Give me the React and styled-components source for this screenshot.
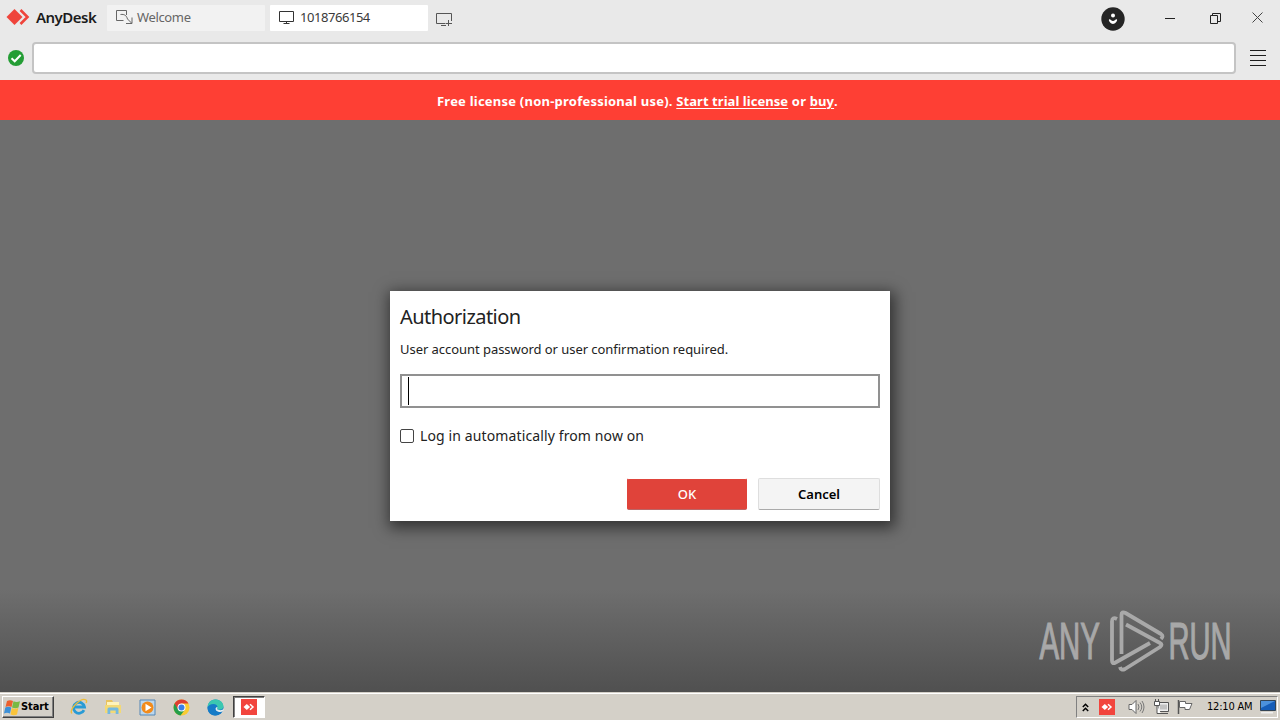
import React from 'react';
import styled, { createGlobalStyle } from 'styled-components';

const GlobalStyle = createGlobalStyle`
  * { box-sizing: border-box; }
  body { margin: 0; overflow: hidden; font-family: "Open Sans", "Noto Sans", sans-serif; }
  svg { display: block; flex: none; }
`;

const Screen = styled.div`
  display: flex;
  flex-direction: column;
  width: 1280px;
  height: 720px;
  overflow: hidden;
`;

const Header = styled.header`
  height: 80px;
  background: #e9e9e9;
  display: flex;
  flex-direction: column;
`;

const TitleBar = styled.div`
  height: 42px;
  display: flex;
  align-items: flex-start;
  padding: 5px 17px 0 6px;
`;

const Brand = styled.div`
  width: 101px;
  height: 24px;
  display: flex;
  align-items: center;
  gap: 6px;
  font: 600 15px/24px "Noto Sans", sans-serif;
  letter-spacing: -0.52px;
  color: #1b1b1b;
`;

const Tab = styled.div`
  width: 158px;
  height: 26px;
  margin-right: ${(p) => (p.$active ? 8 : 5)}px;
  padding: 0 0 2px 9px;
  display: flex;
  align-items: center;
  gap: ${(p) => (p.$active ? 6 : 4)}px;
  border-radius: 1px;
  background: ${(p) => (p.$active ? '#fff' : '#f2f2f2')};
  color: ${(p) => (p.$active ? '#3a3a3a' : '#666')};
  font: 13px/24px "Noto Sans", sans-serif;
  letter-spacing: ${(p) => (p.$active ? '-0.45px' : '-0.35px')};
  svg { margin-top: 1px; }
`;

const NewTab = styled.div`
  padding-top: 8px;
`;

const WindowControls = styled.div`
  margin-left: auto;
  height: 26px;
  display: flex;
  align-items: center;
`;

const Account = styled.div`
  margin-right: 40px;
  padding-top: 2px;
`;

const Minimize = styled.div`
  width: 10px;
  height: 1px;
  margin: 1px 35px 0 0;
  background: #222;
`;

const Restore = styled.div`
  margin-right: 31px;
`;

const Close = styled.div`
  padding-bottom: 1px;
`;

const AddressRow = styled.div`
  display: flex;
  align-items: center;
  height: 32px;
  padding: 0 14px 0 8px;
`;

const AddressInput = styled.div`
  flex: 1;
  height: 32px;
  margin: 0 14px 0 8px;
  background: #fff;
  border: 2px solid #c4c4c4;
  border-radius: 4px;
`;

const Menu = styled.div`
  width: 16px;
  display: flex;
  flex-direction: column;
  gap: 4px;
  i { height: 1px; background: #1d1d1d; }
`;

const License = styled.div`
  height: 40px;
  background: #fe3f34;
  color: #fff;
  font: 700 13px/42px "Noto Sans", sans-serif;
  letter-spacing: 0.225px;
  white-space: nowrap;
  padding-left: 437px;
`;

const Link = styled.span`
  letter-spacing: 0.06px;
  text-decoration: underline;
  text-underline-offset: 2px;
  text-decoration-thickness: 1px;
`;

const Desktop = styled.main`
  height: 572px;
  padding-top: 171px;
  background: linear-gradient(#6e6e6e 0, #6e6e6e 470px, #505050 572px);
  position: relative;
`;

const Dialog = styled.section`
  width: 500px;
  height: 230px;
  margin: 0 auto;
  padding: 10px 10px 11px;
  background: #fff;
  box-shadow: 2px 4px 14px 3px rgba(0, 0, 0, 0.55);
  display: flex;
  flex-direction: column;
  color: #222;
`;

const Title = styled.h1`
  margin: 0;
  font: 400 20px/32px "Noto Sans", sans-serif;
  letter-spacing: -0.55px;
`;

const Message = styled.p`
  margin: 5px 0 14px;
  font: 13px/22px "Noto Sans", sans-serif;
  letter-spacing: -0.05px;
  white-space: nowrap;
`;

const Password = styled.div`
  height: 34px;
  border: 2px solid #919191;
  padding: 1px 6px;
`;

const Caret = styled.div`
  width: 1px;
  height: 28px;
  background: #000;
`;

const Remember = styled.div`
  margin-top: 17px;
  height: 22px;
  display: flex;
  align-items: center;
  gap: 6px;
  font: 14px/22px "Noto Sans", sans-serif;
  letter-spacing: 0.12px;
`;

const Checkbox = styled.div`
  width: 14px;
  height: 14px;
  border: 1px solid #444;
  border-radius: 2px;
`;

const Actions = styled.div`
  margin-top: auto;
  display: flex;
  justify-content: flex-end;
  gap: 11px;
`;

const Button = styled.div`
  width: ${(p) => (p.$primary ? 120 : 122)}px;
  height: 32px;
  border-radius: 2px;
  border: 1px solid ${(p) => (p.$primary ? '#e0433a' : '#dedede')};
  border-bottom-color: ${(p) => (p.$primary ? '#b66' : '#aaa')};
  border-top-color: ${(p) => (p.$primary ? '#fff' : '#dedede')};
  background: ${(p) => (p.$primary ? '#e0433a' : '#f4f4f4')};
  color: ${(p) => (p.$primary ? '#fff' : '#000')};
  font: ${(p) => (p.$primary ? 500 : 600)} 13px/31px "Noto Sans", sans-serif;
  text-align: center;
`;

const Watermark = styled.div`
  position: absolute;
  left: 1036px;
  top: 486px;
`;

const Taskbar = styled.footer`
  height: 28px;
  display: flex;
  align-items: center;
  padding: 2px 2px 0;
  background: #d4d0c8;
  box-shadow: inset 0 1px #d4d0c8, inset 0 2px #fff;
`;

const StartButton = styled.div`
  width: 52px;
  height: 22px;
  margin-right: 8px;
  display: flex;
  align-items: center;
  padding-left: 1px;
  border: 1px solid;
  border-color: #fff #404040 #404040 #fff;
  box-shadow: inset -1px -1px #808080;
  font: 700 11px/20px "DejaVu Sans Condensed", "DejaVu Sans", sans-serif;
  letter-spacing: -0.1px;
  color: #000;
`;

const Launcher = styled.div`
  width: 34px;
  height: 22px;
  display: flex;
  align-items: center;
  justify-content: center;
`;

const RunningApp = styled(Launcher)`
  width: 32px;
  margin-left: 1px;
  background: #fff;
  border: 1px solid;
  border-color: #404040 #fff #fff #404040;
  box-shadow: inset 1px 1px #808080;
`;

const Tray = styled.div`
  width: 202px;
  height: 22px;
  margin-left: auto;
  padding: 0 1px 0 5px;
  display: flex;
  align-items: center;
  border: 1px solid;
  border-color: #808080 #fff #fff #808080;
`;

const TrayItem = styled.div`
  margin-left: ${(p) => p.$gap || 0}px;
`;

const Clock = styled.div`
  margin-left: 13px;
  width: 53px;
  white-space: nowrap;
  font: 11px/20px "DejaVu Sans Condensed", "DejaVu Sans", sans-serif;
  letter-spacing: -0.2px;
  color: #000;
`;

const BrandMark = () => (
  <svg width="24" height="18" viewBox="0 0 24 18">
    <path d="M.5 9 8.5 1l8 8-8 8z" fill="#ef443b" />
    <path d="m14.500 2 7 7-7 7" fill="none" stroke="#ef443b" strokeWidth="2.6" />
  </svg>
);

const OutgoingIcon = () => (
  <svg width="17" height="15" viewBox="0 0 17 15" fill="none" stroke="#666">
    <path d="M10.500 5V.500H.500v10h7" />
    <path d="M4.500 4.500c4-.5 6 1 7 4.500l4 4M16 7.500v6H10" />
  </svg>
);

const MonitorIcon = () => (
  <svg width="15" height="13" viewBox="0 0 15 13" fill="none" stroke="#333">
    <path d="M.5.500h14v10H.5zM7.500 10.500v2M4.500 12.500h6" />
  </svg>
);

const AddMonitorIcon = () => (
  <svg width="16" height="14" viewBox="0 0 16 14" fill="none" stroke="#555">
    <path d="M9 10.500H.5V.500h15V8M12.500 7v6M9.500 10.500H16M5 12.500h5" />
  </svg>
);

const AccountIcon = () => (
  <svg width="24" height="24" viewBox="0 0 24 24">
    <circle cx="12" cy="12" r="11.7" fill="#252525" />
    <circle cx="12" cy="8.500" r="2" fill="#fff" />
    <path d="M8 12.500c1.200-.8 2 1.500 4 1.500s2.800-2.300 4-1.500c.8 1.500-2 4.500-4 4.500s-4.800-3-4-4.500z" fill="#fff" />
  </svg>
);

const RestoreIcon = () => (
  <svg width="11" height="11" viewBox="0 0 11 11" fill="none" stroke="#222">
    <path d="M.5 2.500h7v8h-7zM2.500 2V.500h8v8H8" />
  </svg>
);

const CloseIcon = () => (
  <svg width="11" height="11" viewBox="0 0 11 11">
    <path d="m.5.500 10 10M10.500.500l-10 10" stroke="#444" />
  </svg>
);

const SecureIcon = () => (
  <svg width="16" height="16" viewBox="0 0 16 16">
    <circle cx="8" cy="8" r="8" fill="#249d35" />
    <path d="m3.500 8.300 3.200 3 6-6.300" fill="none" stroke="#fff" strokeWidth="2" />
  </svg>
);

const AnyRunLogo = () => (
  <svg width="220" height="70" viewBox="0 0 220 70">
    <g fill="#a8a8a8" stroke="#a8a8a8" strokeWidth="1.200" fontFamily='"Liberation Sans", sans-serif' fontSize="52">
      <text transform="translate(3.500 53) scale(.565 1)">ANY</text>
      <text transform="translate(132.500 53) scale(.56 1)">RUN</text>
    </g>
    <g fill="none" stroke="#a9a9a9" strokeWidth="3.800" strokeLinejoin="round">
      <path d="M81 13q-5-2.500-5 2.500v39q0 4 3.500 2L114 37" />
      <path d="M85.500 48V9q0-4 4-2L125 28q3 2 0 5" />
      <path d="M90 18.500 124 37q3 1.500 0 4L89 63q-4 2-5-2" />
    </g>
  </svg>
);

const WindowsFlag = () => (
  <svg width="17" height="17" viewBox="0 0 17 17">
    <path d="M3 2q3-1.500 6 0L7.500 8Q4.500 6.500 1.500 8z" fill="#ed602e" />
    <path d="M9.500 2.300q3 1.500 6.500 0L14.500 8.500q-3 1.500-6.500 0z" fill="#79b943" />
    <path d="M1.300 8.500q3-1.500 6 0L6 14.500Q3 13 0 14.500z" fill="#3d90d7" />
    <path d="M7.800 9q3 1.500 6.500 0L13 15.500q-3 1.500-6.500 0z" fill="#fac43a" />
  </svg>
);

const ExplorerIcon = () => (
  <svg width="18" height="18" viewBox="0 0 18 18" fill="none">
    <path d="M14 12.200A5.500 5.500 0 1 1 14.500 9H5" stroke="#299bd5" strokeWidth="2.800" />
    <path d="M1.800 15.500C-1 11 11-1 16 2c1 .8.600 2 .1 3" stroke="#edbd3a" strokeWidth="1.400" />
  </svg>
);

const FolderIcon = () => (
  <svg width="18" height="18" viewBox="0 0 18 18">
    <path d="M2 2h6l1 2h6v9H2z" fill="#e8c25e" />
    <path d="M3 4h12v4H3z" fill="#fff3ba" />
    <path d="M1 7h16v8H1z" fill="#f3d976" />
    <path d="M3.500 16v-5q0-1.500 1.500-1.500h8q1.500 0 1.500 1.500v5h-2.800v-3.500H6.300V16z" fill="#75b9df" />
  </svg>
);

const MediaIcon = () => (
  <svg width="17" height="17" viewBox="0 0 17 17">
    <path d="M1 1h15v15H1z" fill="#bcd7ed" stroke="#5487b6" />
    <circle cx="8.500" cy="8.500" r="6" fill="#f28b1b" />
    <path d="m6.500 4.800 6 3.700-6 3.700z" fill="#fff" />
  </svg>
);

const ChromeIcon = () => (
  <svg width="17" height="17" viewBox="0 0 17 17">
    <circle cx="8.500" cy="8.500" r="8" fill="#f9cb32" />
    <path d="M8.500 8.500 1.600 4.500A8 8 0 0 0 7.500 16.400L12 10.500z" fill="#249e4b" />
    <path d="M1.600 4.500A8 8 0 0 1 15.500 4.500h-7L5 10.500z" fill="#dd3e31" />
    <circle cx="8.500" cy="8.500" r="4" fill="#fff" />
    <circle cx="8.500" cy="8.500" r="3" fill="#397fe6" />
  </svg>
);

const EdgeIcon = () => (
  <svg width="17" height="17" viewBox="0 0 17 17">
    <circle cx="8.500" cy="8.500" r="8" fill="#1479c8" />
    <path d="M.6 8C1-1.500 15-2 16.500 7c.3 4-5 4.500-6.500 3 2-4-4-7-9.400-2z" fill="#3bc8b0" />
    <path d="M1 7.500C5 3.500 10 5 10.500 8c-2-1-3.500 1-2.500 3 1.500 3 5 2.800 7 1.800C10 19 1 17 .5 9z" fill="#167cc7" />
    <path d="M10.300 8c-2.500 0-2.300 4 1 4.800 2 .5 3.300.2 4.700-.6L17 10c-2 1.500-5.500 1.500-7 0q.7-1 .3-2z" fill="#e5eef0" />
  </svg>
);

const RedAppIcon = () => (
  <svg width="16" height="16" viewBox="0 0 16 16">
    <path d="M0 0h16v16H0z" fill="#f2453d" />
    <path d="m2.500 8 3.300-3.100L9.100 8l-3.300 3.100z" fill="#fff" />
    <path d="m9 5.200 3 2.800-3 2.800" fill="none" stroke="#fff" strokeWidth="1.500" />
  </svg>
);

const ChevronsIcon = () => (
  <svg width="7" height="9" viewBox="0 0 7 9">
    <path d="M.8 4 3.500 1.300 6.200 4M.8 8l2.700-2.700L6.200 8" fill="none" stroke="#000" strokeWidth="1.500" />
  </svg>
);

const SpeakerIcon = () => (
  <svg width="17" height="16" viewBox="0 0 17 16">
    <path d="M1 5.500h3L8 1.500v13l-4-4H1z" fill="#fff" stroke="#666" />
    <path d="M10 5q2 3 0 6M12 3.500q3.500 4.500 0 9M14 2q4 6 0 12" fill="none" stroke="#777" />
  </svg>
);

const NetworkIcon = () => (
  <svg width="17" height="16" viewBox="0 0 17 16">
    <path d="M5 3.500h10.500v9H5zM7 14.500h8" fill="#eee" stroke="#555" />
    <path d="M7 5.500h7v5H7z" fill="#c2c2c2" />
    <path d="M1.500 2.500h5v4h-5zM2.500 0v2M5.500 0v2M4 6.500v8h4" fill="#fff" stroke="#555" />
  </svg>
);

const FlagIcon = () => (
  <svg width="17" height="16" viewBox="0 0 17 16">
    <path d="M1.500 15V1" stroke="#555" strokeWidth="1.500" />
    <path d="M2.500 2.500h6v2h6.500l-2.500 6H8v-2H2.500z" fill="#fff" stroke="#666" />
  </svg>
);

const DesktopIcon = () => (
  <svg width="16" height="14" viewBox="0 0 16 14">
    <path d="M.5.500h15v10H.5z" fill="#165db8" stroke="#345" />
    <path d="M1 1h14L1 8z" fill="#4c91dc" />
    <path d="M1 12h12v1.500H1z" fill="#eee" />
  </svg>
);

export default function App() {
  return (
    <Screen>
      <GlobalStyle />
      <Header>
        <TitleBar>
          <Brand><BrandMark />AnyDesk</Brand>
          <Tab><OutgoingIcon />Welcome</Tab>
          <Tab $active><MonitorIcon />1018766154</Tab>
          <NewTab><AddMonitorIcon /></NewTab>
          <WindowControls>
            <Account><AccountIcon /></Account>
            <Minimize />
            <Restore><RestoreIcon /></Restore>
            <Close><CloseIcon /></Close>
          </WindowControls>
        </TitleBar>
        <AddressRow>
          <SecureIcon />
          <AddressInput />
          <Menu><i /><i /><i /><i /></Menu>
        </AddressRow>
      </Header>
      <License>
        Free license (non-professional use). <Link>Start trial license</Link> or <Link>buy</Link>.
      </License>
      <Desktop>
        <Dialog>
          <Title>Authorization</Title>
          <Message>User account password or user confirmation required.</Message>
          <Password><Caret /></Password>
          <Remember><Checkbox />Log in automatically from now on</Remember>
          <Actions>
            <Button $primary>OK</Button>
            <Button>Cancel</Button>
          </Actions>
        </Dialog>
        <Watermark><AnyRunLogo /></Watermark>
      </Desktop>
      <Taskbar>
        <StartButton><WindowsFlag />Start</StartButton>
        <Launcher><ExplorerIcon /></Launcher>
        <Launcher><FolderIcon /></Launcher>
        <Launcher><MediaIcon /></Launcher>
        <Launcher><ChromeIcon /></Launcher>
        <Launcher><EdgeIcon /></Launcher>
        <RunningApp><RedAppIcon /></RunningApp>
        <Tray>
          <ChevronsIcon />
          <TrayItem $gap={10}><RedAppIcon /></TrayItem>
          <TrayItem $gap={13}><SpeakerIcon /></TrayItem>
          <TrayItem $gap={8}><NetworkIcon /></TrayItem>
          <TrayItem $gap={7}><FlagIcon /></TrayItem>
          <Clock>12:10 AM</Clock>
          <DesktopIcon />
        </Tray>
      </Taskbar>
    </Screen>
  );
}
